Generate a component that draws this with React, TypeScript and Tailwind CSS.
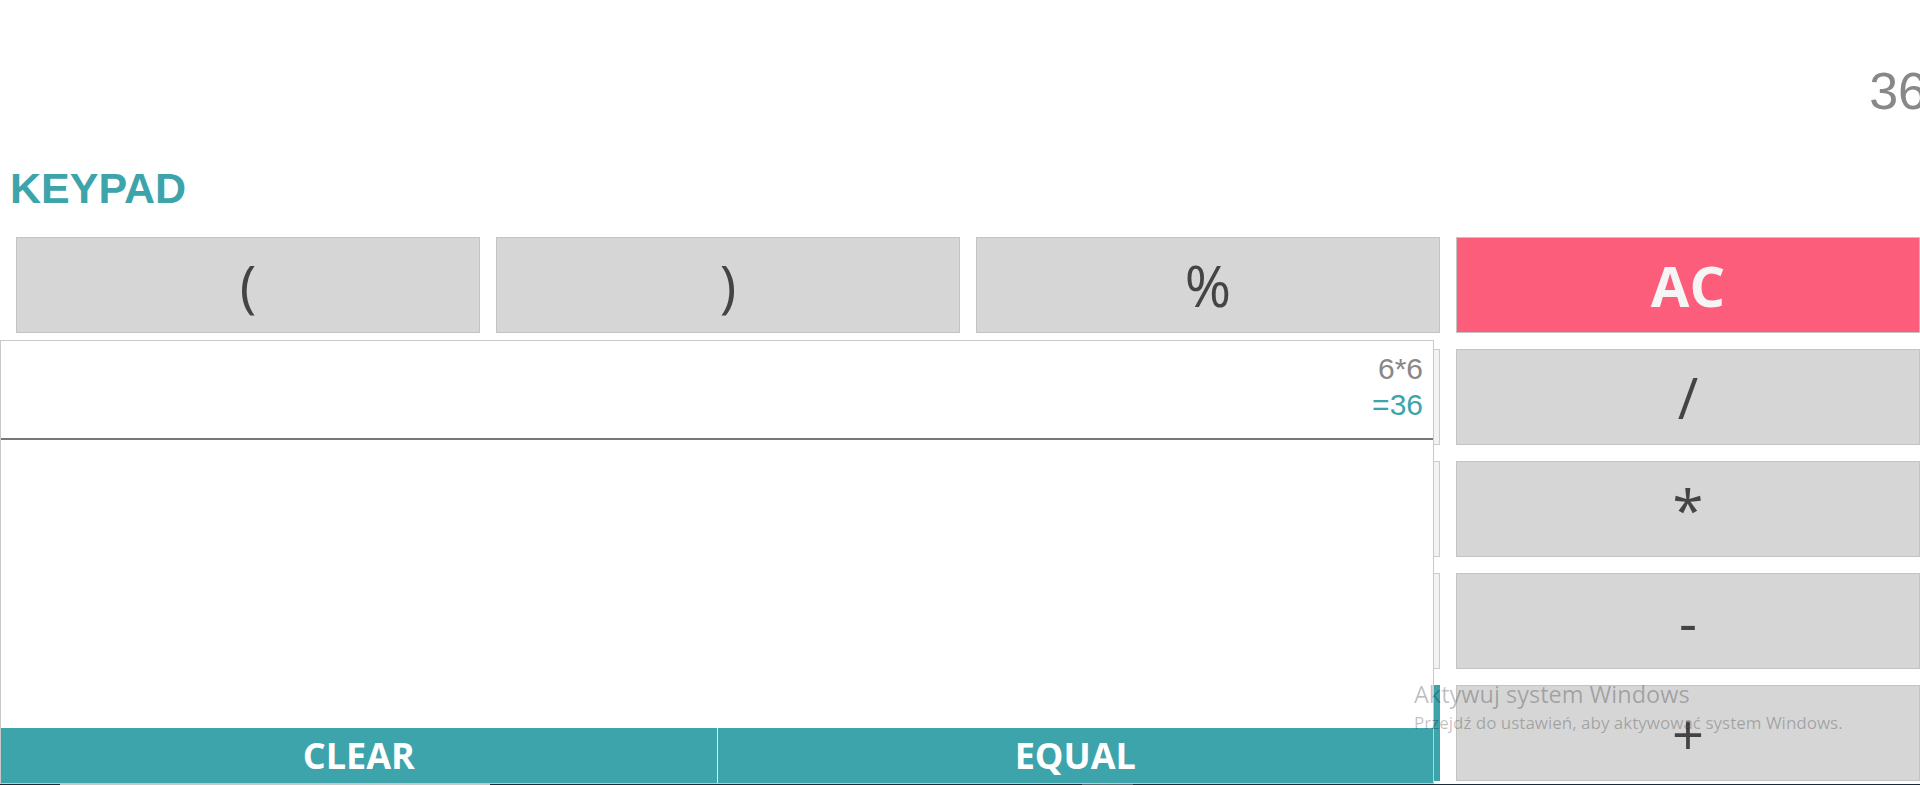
const keys = [
  { label: '(', kind: 'op' },
  { label: ')', kind: 'op' },
  { label: '%', kind: 'op' },
  { label: 'AC', kind: 'clear' },
  { label: '7', kind: 'num' },
  { label: '8', kind: 'num' },
  { label: '9', kind: 'num' },
  { label: '/', kind: 'op' },
  { label: '4', kind: 'num' },
  { label: '5', kind: 'num' },
  { label: '6', kind: 'num' },
  { label: '*', kind: 'op' },
  { label: '1', kind: 'num' },
  { label: '2', kind: 'num' },
  { label: '3', kind: 'num' },
  { label: '-', kind: 'op' },
  { label: '0', kind: 'num' },
  { label: '.', kind: 'num' },
  { label: '=', kind: 'eq' },
  { label: '+', kind: 'op' },
]

const keyStyle: Record<string, string> = {
  op: 'bg-[#d6d6d6] border-[#c4c4c4] text-[#444444] font-normal',
  num: 'bg-[#f3f3f3] border-[#cccccc] text-[#444444] font-normal',
  clear: 'bg-[#fc5d7a] border-[#c4c4c4] text-[#f5f5f5] font-bold',
  eq: 'bg-[#3da4ab] border-[#3da4ab] text-white font-bold',
}

const Key = ({ label, kind }: { label: string; kind: string }) => {
  return (
    <button
      type="button"
      className={`h-[96px] border flex items-center justify-center text-[56px] leading-none font-['Open_Sans',sans-serif] ${keyStyle[kind]}`}
    >
      {label}
    </button>
  )
}

const HistoryPanel = () => {
  return (
    <div className="absolute left-0 top-[340px] w-[1434px] h-[444px] bg-white border border-[#c8c8c8] flex flex-col">
      <div className="h-[99px] border-b-2 border-[#777777] pt-[10px] pr-[10px] text-right text-[30px] leading-[36px] font-['Liberation_Sans',Arial,sans-serif]">
        <div className="text-[#888888]">6*6</div>
        <div className="text-[#3da4ab]">=36</div>
      </div>
      <div className="flex-1" />
      <div className="h-[55px] flex bg-[#3da4ab] text-white font-bold text-[36px] leading-none font-['Open_Sans',sans-serif]">
        <button type="button" className="flex-1 flex items-center justify-center border-r border-[#d9eef0]">
          CLEAR
        </button>
        <button type="button" className="flex-1 flex items-center justify-center">
          EQUAL
        </button>
      </div>
    </div>
  )
}

export default function App() {
  return (
    <div className="relative w-[1920px] h-[785px] overflow-hidden bg-white">
      <div className="h-[150px] pt-[65px]">
        <div className="flex justify-end -mr-[7px] text-[52px] leading-none text-[#888888] font-['Liberation_Sans',Arial,sans-serif]">
          36
        </div>
      </div>
      <h2 className="h-[87px] pt-[17px] pl-[10px] text-[43px] leading-none font-bold text-[#3da4ab] font-['Liberation_Sans',Arial,sans-serif]">
        KEYPAD
      </h2>
      <div className="grid grid-cols-4 gap-4 pl-4">
        {keys.map((k) => (
          <Key key={k.label} label={k.label} kind={k.kind} />
        ))}
      </div>

      <HistoryPanel />

      {/* windows activation watermark */}
      <div className="absolute left-[1414px] top-[680px] text-black/25 font-['Open_Sans',sans-serif] pointer-events-none">
        <div className="text-[23.5px] leading-[28px]">Aktywuj system Windows</div>
        <div className="text-[17px] leading-[22px] mt-[4px]">
          Przejdź do ustawień, aby aktywować system Windows.
        </div>
      </div>

      <div className="absolute bottom-0 left-0 w-full h-[1px] flex">
        <div className="w-[60px] bg-[#1f2a36]" />
        <div className="w-[430px] bg-[#c8c8c8]" />
        <div className="w-[592px] bg-[#1c2b3a]" />
        <div className="w-[51px] bg-[#5a6570]" />
        <div className="flex-1 bg-[#1c2b3a]" />
      </div>
    </div>
  )
}
